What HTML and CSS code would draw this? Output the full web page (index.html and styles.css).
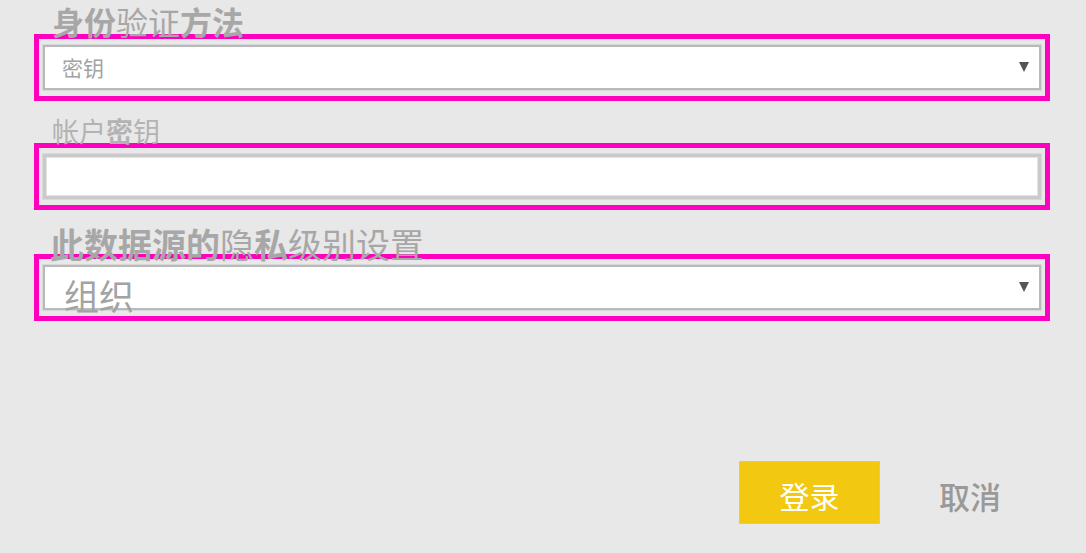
FILE: index.html
```html
<!DOCTYPE html>
<html lang="zh-CN">
<head>
<meta charset="utf-8">
<link rel="stylesheet" href="styles.css">
</head>
<body>
<div class="form">
  <div class="label label-auth"><b>身份</b><span class="thin">验证</span><b>方法</b></div>
  <div class="hl">
    <div class="field select">
      <span class="value value-small">密钥</span>
      <span class="caret"></span>
    </div>
  </div>

  <div class="label label-key"><span class="thin">帐户</span><b>密</b><span class="thin">钥</span></div>
  <div class="hl">
    <div class="field textbox"></div>
  </div>

  <div class="label label-privacy"><span class="mid">此数据源的</span><span class="thin">隐</span><span class="mid">私</span><span class="thin">级别设置</span></div>
  <div class="hl">
    <div class="field select">
      <span class="value value-large">组织</span>
      <span class="caret"></span>
    </div>
  </div>

  <div class="actions">
    <button class="btn btn-primary">登录</button>
    <button class="btn btn-link">取消</button>
  </div>
</div>
</body>
</html>
```

FILE: styles.css
```css
html, body {
  margin: 0;
  padding: 0;
  background: #e8e8e8;
}
body {
  font-family: "Noto Sans CJK SC", "Noto Sans", sans-serif;
  width: 1086px;
  height: 553px;
  overflow: hidden;
}
.form {
  padding-left: 34px;
  width: 1016px;
}
.label {
  color: #a7a7a7;
  padding-left: 18px;
  box-sizing: border-box;
  white-space: nowrap;
  overflow: visible;
}
.label b { font-weight: 700; }
.label .thin { font-weight: 400; }
.label .mid { font-weight: 700; }
.label-auth {
  font-size: 32px;
  line-height: 32px;
  height: 34px;
  padding-top: 5px;
}
.label-key {
  font-size: 27px;
  line-height: 27px;
  height: 26px;
  margin-top: 16px;
  color: #b3b3b3;
}
.label-privacy {
  font-size: 34px;
  line-height: 34px;
  height: 27px;
  margin-top: 17px;
  padding-left: 16px;
}
.hl {
  border: 5px solid #ff00bf;
  padding: 6px 4px 6px 4px;
  box-sizing: border-box;
  height: 67px;
}
.field {
  height: 45px;
  box-sizing: border-box;
  background: #ffffff;
  border: 2px solid #b9b9b9;
  box-shadow: 0 0 0 1px #d8d8d8;
  display: flex;
  align-items: center;
  position: relative;
}
.textbox {
  border: 3px solid #cacaca;
  box-shadow: 0 0 0 1px #dadada, inset 0 0 0 1px #e4e4e4;
}
.value {
  color: #a3a3a3;
  white-space: nowrap;
  font-weight: 400;
}
.value-small {
  font-size: 21px;
  line-height: 21px;
  padding-left: 17px;
  margin-top: -1px;
}
.value-large {
  font-size: 35px;
  line-height: 35px;
  padding-left: 19px;
  margin-top: 14px;
}
.caret {
  position: absolute;
  right: 10px;
  top: 15px;
  width: 0;
  height: 0;
  border-left: 5px solid transparent;
  border-right: 5px solid transparent;
  border-top: 10px solid #555555;
}
.actions {
  display: flex;
  justify-content: flex-end;
  align-items: center;
  margin-top: 140px;
  padding-right: 20px;
}
.btn {
  font-family: "Noto Sans CJK SC", "Noto Sans", sans-serif;
  border: none;
  background: transparent;
  padding: 0;
  cursor: pointer;
}
.btn-primary {
  width: 141px;
  height: 63px;
  background: #f2c811;
  border: 1px solid #e9cb4d;
  color: #ffffff;
  font-size: 30px;
  line-height: 30px;
  font-weight: 400;
  padding-top: 4px;
}
.btn-link {
  width: 120px;
  height: 63px;
  margin-left: 30px;
  color: #999999;
  font-size: 31px;
  line-height: 31px;
  font-weight: 500;
  padding-top: 6px;
}
```
